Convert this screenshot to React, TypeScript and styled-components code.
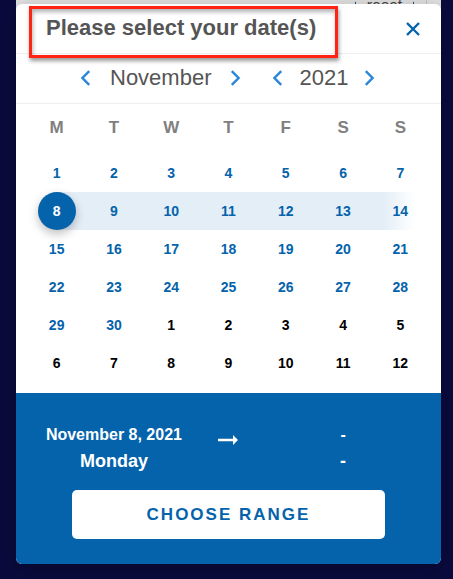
import React, { useState } from "react";
import styled, { createGlobalStyle, css } from "styled-components";

const blue = "#0563ab";
const font = '"Liberation Sans", Arial, sans-serif';

const GlobalStyle = createGlobalStyle`
  *, *::before, *::after { box-sizing: border-box; }
  body { margin: 0; background: #0a0a3d; font-family: ${font}; }
  button { font-family: inherit; border: 0; padding: 0; background: none; cursor: pointer; }
`;

const Page = styled.div`
  position: relative;
  min-height: 100vh;
  padding: 4px 12px 15px 16px;
  overflow: hidden;
`;

const Backdrop = styled.div`
  position: absolute;
  top: 0;
  left: 16px;
  right: 12px;
  height: 24px;
  background: #e2e2e2;
  display: flex;
  justify-content: flex-end;
`;

const BackdropPanel = styled.div`
  flex: 1;
  display: flex;
  justify-content: flex-end;
  height: 24px;
  margin-right: 14px;
  padding-right: 12px;
  border-right: 1px solid #c4c4c4;
`;

const ResetButton = styled.button`
  width: 59px;
  height: 40px;
  margin-top: -14px;
  border: 1px dashed #1f5580;
  color: #444;
  font-size: 16px;
`;

const Dialog = styled.section`
  position: relative;
  background: #fff;
  border-radius: 6px;
  box-shadow: 0 4px 20px rgba(0, 0, 0, 0.25);
`;

const Header = styled.header`
  display: flex;
  justify-content: space-between;
  align-items: center;
  height: 50px;
  padding: 0 20px 0 30px;
  border-bottom: 1px solid #eceeef;
`;

const Title = styled.h1`
  position: relative;
  margin: 0 0 1px;
  font-size: 22px;
  line-height: 46px;
  color: #555;
  white-space: nowrap;

  &::after {
    content: "";
    position: absolute;
    inset: 1px -22px -7px -17px;
    border: 3px solid #ff2314;
    box-shadow: 1px 3px 4px rgba(0, 0, 0, 0.4), inset 1px 3px 4px rgba(0, 0, 0, 0.3);
    pointer-events: none;
  }
`;

const IconButton = styled.button`
  display: flex;
  color: ${(p) => p.color ?? "#2b86d9"};
`;

const Nav = styled.nav`
  display: flex;
  gap: 31px;
  height: 50px;
  padding: 0 0 1px 64px;
  border-bottom: 1px solid #eceeef;
`;

const Stepper = styled.div<{ $gap: number }>`
  display: flex;
  align-items: center;
  gap: ${(p) => p.$gap}px;
  font-size: 22px;
  line-height: 26px;
  color: #555;
`;

const Calendar = styled.div`
  padding: 0 12px 11px;
`;

const Grid = styled.table`
  width: 100%;
  table-layout: fixed;
  border-collapse: collapse;
`;

const Weekday = styled.th`
  height: 50px;
  padding: 0 0 3px;
  font-size: 17px;
  color: #808080;
`;

const DayCell = styled.td<{ $range?: "start" | "mid" | "end" }>`
  height: 38px;
  padding: 0;
  text-align: center;
  ${(p) => p.$range === "start" && css`background: linear-gradient(90deg, #fff 50%, #e4eef7 50%);`}
  ${(p) => p.$range === "mid" && css`background: #e4eef7;`}
  ${(p) => p.$range === "end" && css`background: linear-gradient(90deg, #e4eef7 20%, #fff 75%);`}
`;

const Day = styled.button<{ $selected?: boolean; $outside?: boolean }>`
  display: block;
  width: 38px;
  height: 38px;
  margin: 0 auto;
  border-radius: 50%;
  font-size: 14px;
  font-weight: 700;
  color: ${(p) => (p.$selected ? "#fff" : p.$outside ? "#000" : blue)};
  ${(p) => p.$selected && css`
    background: ${blue};
    box-shadow: 0 4px 10px rgba(0, 0, 0, 0.25);
  `}
`;

const Footer = styled.footer`
  padding: 30px 12px 25px;
  background: ${blue};
  border-radius: 0 0 6px 6px;
  color: #fff;
`;

const Summary = styled.div`
  display: grid;
  grid-template-columns: 3fr 1fr 3fr;
  justify-items: center;
`;

const DateInfo = styled.div`
  display: flex;
  flex-direction: column;
  align-items: center;
  font-weight: 700;
  white-space: nowrap;
`;

const DateLine = styled.span`
  font-size: 16px;
  line-height: 24px;
`;

const WeekdayLine = styled.span`
  font-size: 18px;
  line-height: 28px;
`;

const Arrow = styled.svg`
  display: block;
  margin-top: 11px;
`;

const ChooseButton = styled.button`
  display: block;
  width: calc(100% - 88px);
  height: 49px;
  margin: 15px auto 0;
  border-radius: 5px;
  background: #fff;
  color: ${blue};
  font-size: 17px;
  font-weight: 700;
  letter-spacing: 2px;
`;

const Chevron = ({ next = false }: { next?: boolean }) => (
  <svg width="11" height="16" viewBox="0 0 11 16" fill="none" stroke="currentColor" strokeWidth="2.4">
    <path d={next ? "M1.8 1.2 8.6 8 1.8 14.8" : "M9.2 1.2 2.4 8 9.2 14.8"} />
  </svg>
);

const months = ["January", "February", "March", "April", "May", "June", "July", "August", "September", "October", "November", "December"];
const weekdays = ["Monday", "Tuesday", "Wednesday", "Thursday", "Friday", "Saturday", "Sunday"];

export default function App() {
  const [view, setView] = useState({ year: 2021, month: 10 });
  const [start, setStart] = useState(new Date(2021, 10, 8));

  const step = (n: number) => {
    const d = new Date(view.year, view.month + n, 1);
    setView({ year: d.getFullYear(), month: d.getMonth() });
  };
  const lead = (new Date(view.year, view.month, 1).getDay() + 6) % 7;
  const weeks = Array.from({ length: 6 }, (_, w) =>
    Array.from({ length: 7 }, (_, d) => new Date(view.year, view.month, 1 - lead + w * 7 + d)),
  );
  const rangeOf = (week: Date[], i: number) => {
    const s = week.findIndex((d) => d.getTime() === start.getTime());
    if (s < 0 || i < s) return undefined;
    return i === s ? "start" : i === 6 ? "end" : "mid";
  };

  return (
    <>
      <GlobalStyle />
      <Page>
        <Backdrop>
          <BackdropPanel>
            <ResetButton type="button">reset</ResetButton>
          </BackdropPanel>
        </Backdrop>
        <Dialog role="dialog" aria-labelledby="dialog-title">
          <Header>
            <Title id="dialog-title">Please select your date(s)</Title>
            <IconButton type="button" aria-label="Close" color={blue}>
              <svg width="16" height="16" viewBox="0 0 16 16" stroke="currentColor" strokeWidth="2.4">
                <path d="M2 2 14 14M14 2 2 14" />
              </svg>
            </IconButton>
          </Header>
          <Nav aria-label="Month and year">
            <Stepper $gap={19}>
              <IconButton type="button" aria-label="Previous month" onClick={() => step(-1)}><Chevron /></IconButton>
              <span>{months[view.month]}</span>
              <IconButton type="button" aria-label="Next month" onClick={() => step(1)}><Chevron next /></IconButton>
            </Stepper>
            <Stepper $gap={16}>
              <IconButton type="button" aria-label="Previous year" onClick={() => step(-12)}><Chevron /></IconButton>
              <span>{view.year}</span>
              <IconButton type="button" aria-label="Next year" onClick={() => step(12)}><Chevron next /></IconButton>
            </Stepper>
          </Nav>
          <Calendar>
            <Grid>
              <thead>
                <tr>{weekdays.map((d) => <Weekday key={d} scope="col" abbr={d}>{d[0]}</Weekday>)}</tr>
              </thead>
              <tbody>
                {weeks.map((week, w) => (
                  <tr key={w}>
                    {week.map((d, i) => (
                      <DayCell key={i} $range={rangeOf(week, i)}>
                        <Day
                          type="button"
                          $selected={d.getTime() === start.getTime()}
                          $outside={d.getMonth() !== view.month}
                          onClick={() => setStart(d)}
                        >
                          {d.getDate()}
                        </Day>
                      </DayCell>
                    ))}
                  </tr>
                ))}
              </tbody>
            </Grid>
          </Calendar>
          <Footer>
            <Summary>
              <DateInfo>
                <DateLine>{`${months[start.getMonth()]} ${start.getDate()}, ${start.getFullYear()}`}</DateLine>
                <WeekdayLine>{weekdays[(start.getDay() + 6) % 7]}</WeekdayLine>
              </DateInfo>
              <Arrow width="20" height="12" viewBox="0 0 20 12" fill="#fff" aria-hidden="true">
                <path d="M0 4.7h15V1l5 5-5 5V7.3H0z" />
              </Arrow>
              <DateInfo>
                <DateLine>-</DateLine>
                <WeekdayLine>-</WeekdayLine>
              </DateInfo>
            </Summary>
            <ChooseButton type="button">CHOOSE RANGE</ChooseButton>
          </Footer>
        </Dialog>
      </Page>
    </>
  );
}
